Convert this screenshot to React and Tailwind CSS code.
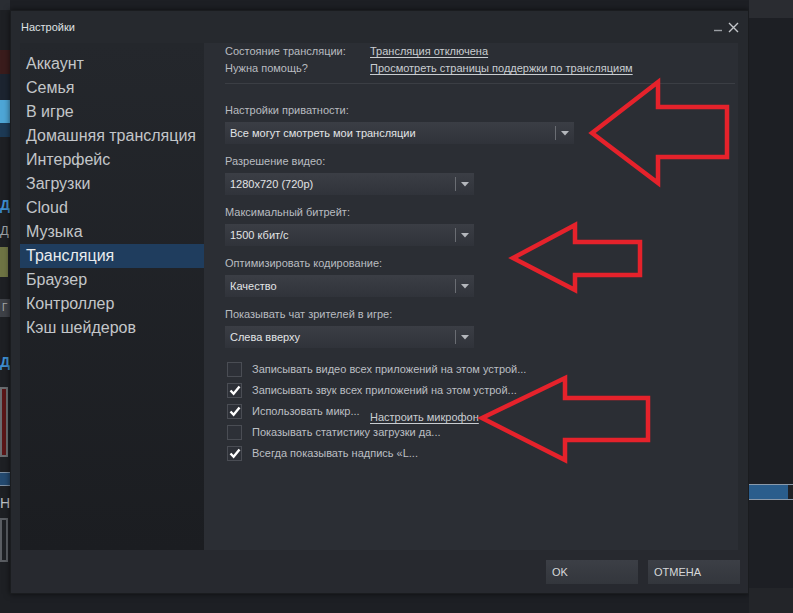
import React from "react";

const navItems = [
  "Аккаунт",
  "Семья",
  "В игре",
  "Домашняя трансляция",
  "Интерфейс",
  "Загрузки",
  "Cloud",
  "Музыка",
  "Трансляция",
  "Браузер",
  "Контроллер",
  "Кэш шейдеров",
];

function Dropdown({ value, wide }) {
  return (
    <div
      className={`${wide ? "w-[349px]" : "w-[249px]"} h-[22px] flex items-center bg-gradient-to-b from-[#3b3e45] to-[#30333a]`}
    >
      <div className="flex-1 pl-[5px] text-[11px] text-[#e2e4e6] truncate">{value}</div>
      <div className="w-px h-[14px] bg-[#6a6d73]" />
      <div className="w-[18px] flex items-center justify-center">
        <svg width="8" height="5" viewBox="0 0 8 5">
          <path d="M0 0 H8 L4 4.5 Z" fill="#b4b7bc" />
        </svg>
      </div>
    </div>
  );
}

function Field({ label, value, wide }) {
  return (
    <div className="mb-[5px]">
      <div className="h-[24px] flex items-center text-[11px] text-[#b9bcc0]">{label}</div>
      <Dropdown value={value} wide={wide} />
    </div>
  );
}

function Check({ checked, label }) {
  return (
    <div className="h-[21px] flex items-center">
      <div className="w-[15px] h-[15px] ml-[2px] border border-[#4a4d54] bg-[#2d3037] flex items-center justify-center">
        {checked && (
          <svg width="12" height="11" viewBox="0 0 12 11">
            <path d="M1.5 5.5 L4.6 8.8 L10.5 1.5" stroke="#ffffff" strokeWidth="2.4" fill="none" />
          </svg>
        )}
      </div>
      <div className="ml-[10px] text-[11px] text-[#bcbfc3] whitespace-nowrap">{label}</div>
    </div>
  );
}

function LeftStrip() {
  return (
    <div className="w-[10px] h-full flex flex-col bg-[#1e2024] overflow-hidden">
      <div className="h-[10px] bg-[#2a2d33]" />
      <div className="h-[40px]" />
      <div className="h-[24px] bg-[#3a1c1c]" />
      <div className="h-[26px] bg-[#1c2430]" />
      <div className="h-[23px] bg-[#4ea6d6]" />
      <div className="h-[14px] bg-[#1d3a55]" />
      <div className="h-[60px]" />
      <div className="h-[16px] text-[14px] leading-[16px] text-[#3f8fd0] font-bold">Д</div>
      <div className="h-[10px]" />
      <div className="h-[16px] text-[13px] leading-[16px] text-[#9fa3a8]">Д</div>
      <div className="h-[8px]" />
      <div className="h-[30px] w-[8px] bg-[#6e7444]" />
      <div className="h-[22px]" />
      <div className="h-[18px] bg-[#3e4147] text-[10px] leading-[18px] text-[#aaa] pl-[2px]">Г</div>
      <div className="h-[36px]" />
      <div className="h-[18px] text-[14px] leading-[18px] text-[#3f8fd0] font-bold">Д</div>
      <div className="h-[16px]" />
      <div className="h-[70px] w-[8px] border-2 border-[#6a6d70] bg-[#5a1618]" />
      <div className="h-[15px]" />
      <div className="h-[14px] bg-[#244a70] border-y border-[#7d8fa3]" />
      <div className="h-[8px]" />
      <div className="h-[18px] text-[14px] leading-[18px] text-[#c0c3c6]">Н</div>
      <div className="h-[6px]" />
      <div className="h-[44px] w-[8px] border-2 border-[#5a5d62]" />
    </div>
  );
}

function RightStrip() {
  return (
    <div className="flex-1 h-full flex flex-col bg-[#1d1f24]">
      <div className="h-[18px] bg-[#2a2c31]" />
      <div className="h-[466px]" />
      <div className="h-[16px] border-y border-[#8a99aa] bg-[#1f2126] flex">
        <div className="w-[39px] bg-[#2a5d8c]" />
      </div>
      <div className="flex-1" />
      <div className="h-[25px] bg-[#232529]" />
    </div>
  );
}

export default function App() {
  return (
    <div
      className="relative w-[793px] h-[613px] flex bg-[#1d1f24] overflow-hidden"
      style={{ fontFamily: '"Liberation Sans", Arial, sans-serif' }}
    >
      <LeftStrip />
      <div className="w-[739px] h-[584px] mt-[10px] bg-[#26292e] border border-[#1a1c1f] flex flex-col shadow-[0_0_6px_rgba(0,0,0,0.6)]">
        <div className="h-[32px] flex items-center justify-between pl-[10px] pr-[9px]">
          <div className="text-[11px] text-[#dfe1e3] mt-[1px]">Настройки</div>
          <div className="flex items-center gap-[5px]">
            <svg width="9" height="10" viewBox="0 0 9 10">
              <path d="M0 8.5 H8" stroke="#9a9ea3" strokeWidth="1.4" />
            </svg>
            <svg width="11" height="11" viewBox="0 0 11 11">
              <path d="M1 1 L10 10 M10 1 L1 10" stroke="#c3c6ca" strokeWidth="1.4" />
            </svg>
          </div>
        </div>
        <div className="h-[507px] flex pl-[9px] pr-[10px]">
          <div className="w-[184px] h-full bg-gradient-to-b from-[#24272c] to-[#1b1d21] pt-[9px]">
            {navItems.map((item) => (
              <div
                key={item}
                className={`h-[24px] flex items-center pl-[6px] text-[16px] ${
                  item === "Трансляция" ? "bg-[#1f3d5e] text-[#e9ecee]" : "text-[#c3c6c9]"
                }`}
              >
                {item}
              </div>
            ))}
          </div>
          <div className="relative flex-1 h-full bg-[#2b2e34] pl-[21px] pr-[3px]">
            <div className="h-[17px] flex items-center text-[11px]">
              <div className="w-[145px] text-[#b9bcc0]">Состояние трансляции:</div>
              <div className="text-[#c9cdd1] underline underline-offset-2">Трансляция отключена</div>
            </div>
            <div className="h-[17px] flex items-center text-[11px]">
              <div className="w-[145px] text-[#b9bcc0]">Нужна помощь?</div>
              <div className="text-[#c9cdd1] underline underline-offset-2">
                Просмотреть страницы поддержки по трансляциям
              </div>
            </div>
            <div className="h-px bg-[#3b3e44] mt-[6px] mb-[14px]" />
            <Field label="Настройки приватности:" value="Все могут смотреть мои трансляции" wide />
            <Field label="Разрешение видео:" value="1280x720 (720p)" />
            <Field label="Максимальный битрейт:" value="1500 кбит/с" />
            <Field label="Оптимизировать кодирование:" value="Качество" />
            <Field label="Показывать чат зрителей в игре:" value="Слева вверху" />
            <div className="mt-[11px]">
              <Check label="Записывать видео всех приложений на этом устрой..." />
              <Check checked label="Записывать звук всех приложений на этом устрой..." />
              <div className="relative">
                <Check checked label="Использовать микр..." />
                <div className="absolute left-[145px] top-[8px] text-[11px] text-[#c9cdd1] underline underline-offset-2">
                  Настроить микрофон
                </div>
              </div>
              <Check label="Показывать статистику загрузки да..." />
              <Check checked label="Всегда показывать надпись «L..." />
            </div>
          </div>
        </div>
        <div className="flex-1 bg-[#27292f] flex justify-end gap-[10px] pt-[10px] pr-[8px]">
          <div className="w-[92px] h-[24px] bg-gradient-to-b from-[#3c3f46] to-[#33363c] flex items-center pl-[6px] text-[11px] text-[#d6d8da]">
            OK
          </div>
          <div className="w-[92px] h-[24px] bg-gradient-to-b from-[#3c3f46] to-[#33363c] flex items-center pl-[6px] text-[11px] text-[#d6d8da]">
            ОТМЕНА
          </div>
        </div>
      </div>
      <RightStrip />
      <svg
        className="absolute left-0 top-0 pointer-events-none"
        width="793"
        height="613"
        viewBox="0 0 793 613"
      >
        <g fill="none" stroke="#e5222b" strokeWidth="4.5" strokeLinejoin="miter">
          <polygon points="592,133 658,82 658,107 727,107 727,157 658,157 658,183" />
          <polygon points="513,258 575,225 575,242 640,242 640,275 575,275 575,290" />
          <polygon points="482,418 565,378 565,398 648,398 648,440 565,440 565,460" />
        </g>
      </svg>
    </div>
  );
}
